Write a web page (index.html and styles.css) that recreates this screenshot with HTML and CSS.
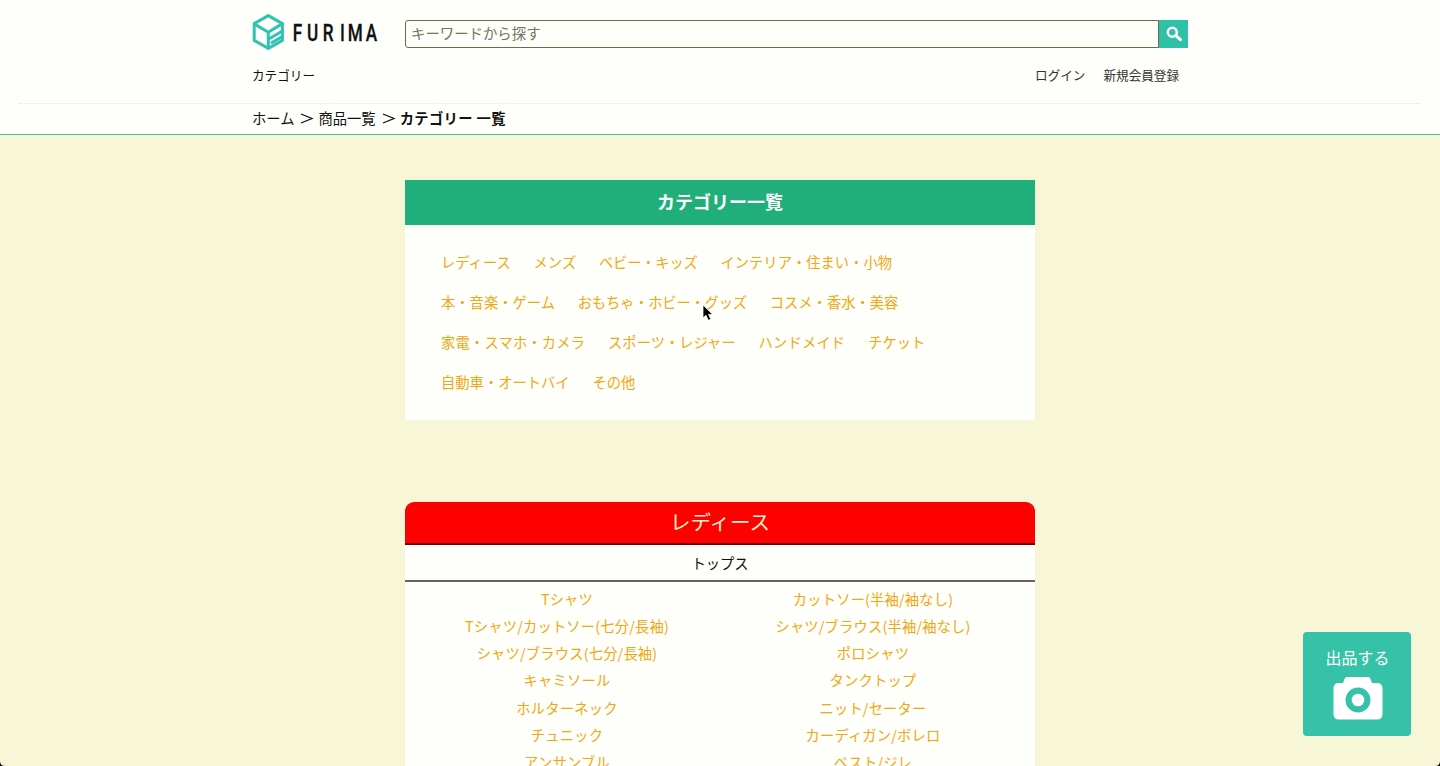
FILE: index.html
```html
<!DOCTYPE html>
<html lang="ja">
<head>
<meta charset="utf-8">
<title>FURIMA</title>
<link rel="stylesheet" href="styles.css">
</head>
<body>
<header class="header">
  <div class="header-top">
    <a class="logo">
      <svg width="130" height="38" viewBox="0 0 130 38">
        <g fill="none" stroke="#30c3b0" stroke-width="3" stroke-linejoin="round" stroke-linecap="round">
          <path d="M16.3 2.6 30.4 10.6V27.4L16.3 35.4 2.200 27.400V10.600Z"/>
          <path d="M2.500 11 16.300 19.300V35M16.300 19.300 30.400 10.600M16.800 26 30 18.300M20 29.500 30 23.800"/>
        </g>
        <text class="logo-text" transform="scale(.7 1)" x="58.300 78.500 101.200 125.700 136.800 162.500" y="28">FURIMA</text>
      </svg>
    </a>
    <form class="search">
      <input class="search-input" type="text" placeholder="キーワードから探す">
      <button class="search-button" type="button" aria-label="検索">
        <svg width="16" height="16" viewBox="0 0 16 16" fill="none" stroke="#fff"><circle cx="6.300" cy="6.200" r="4.500" stroke-width="2.500"/><path d="M9.700 9.400 14.300 13.700" stroke-width="3" stroke-linecap="round"/></svg>
      </button>
    </form>
  </div>
  <nav class="header-nav">
    <a>カテゴリー</a>
    <div class="user-links"><a>ログイン</a><a>新規会員登録</a></div>
  </nav>
  <div class="divider"></div>
  <div class="breadcrumbs"><a>ホーム</a><svg class="sep" viewBox="0 0 24 28"><path d="M7 10 18 14.500 7 19"/></svg><a>商品一覧</a><svg class="sep" viewBox="0 0 24 28"><path d="M7 10 18 14.500 7 19"/></svg><b>カテゴリー 一覧</b></div>
</header>
<main class="main">
  <section class="categories">
    <h2 class="categories-title">カテゴリー一覧</h2>
    <div class="categories-list">
      <a>レディース</a><a>メンズ</a><a class="tight">ベビー・キッズ</a><a>インテリア・住まい・小物</a>
      <a>本・音楽・ゲーム</a><a class="tight">おもちゃ・ホビー・グッズ</a><a>コスメ・香水・美容</a>
      <a class="wide">家電・スマホ・カメラ</a><a>スポーツ・レジャー</a><a class="wide">ハンドメイド</a><a>チケット</a>
      <a>自動車・オートバイ</a><a>その他</a>
    </div>
  </section>
  <section class="group">
    <h3 class="group-title">レディース</h3>
    <h4 class="group-subtitle">トップス</h4>
    <div class="group-items">
      <a>Tシャツ</a><a>カットソー(半袖/袖なし)</a>
      <a>Tシャツ/カットソー(七分/長袖)</a><a>シャツ/ブラウス(半袖/袖なし)</a>
      <a>シャツ/ブラウス(七分/長袖)</a><a>ポロシャツ</a>
      <a>キャミソール</a><a>タンクトップ</a>
      <a>ホルターネック</a><a>ニット/セーター</a>
      <a>チュニック</a><a>カーディガン/ボレロ</a>
      <a>アンサンブル</a><a>ベスト/ジレ</a>
    </div>
  </section>
</main>
<a class="sell">
  <span>出品する</span>
  <svg width="50" height="44" viewBox="0 0 50 44"><path fill="#fff" fill-rule="evenodd" d="M14 1H35Q37 1 37.500 3L39 7H44Q49.500 7 49.500 12.500V38Q49.500 43.500 44 43.500H6Q.5 43.500.5 38V12.500Q.5 7 6 7H10L11.500 3Q12 1 14 1ZM25 11.500A12.500 12.500 0 1 0 25 36.500 12.500 12.500 0 1 0 25 11.500Z"/><circle cx="25" cy="24" r="6.300" fill="#fff"/></svg>
</a>
<svg class="cursor" width="13" height="18" viewBox="0 0 13 18"><path d="M1 1V14L4 11.300 6.300 16.300 8.800 15.200 6.600 10.400H10.700Z" fill="#000" stroke="#fff" stroke-width=".8"/></svg>
<svg class="corner corner-left" width="5" height="5"><path d="M0 0Q0 5 5 5H0Z"/></svg>
<svg class="corner corner-right" width="5" height="5"><path d="M5 0Q5 5 0 5H5Z"/></svg>
</body>
</html>
```
FILE: styles.css
```css
* { box-sizing: border-box; margin: 0; padding: 0; }
body {
  height: 766px;
  overflow: hidden;
  background: #f7f7d8;
  color: #111;
  font-family: "Noto Sans CJK JP", sans-serif;
  font-size: 14.3px;
}
.header { height: 135px; background: #fefefa; border-bottom: 1px solid #4bb8a5; }
.header-top { width: 936px; height: 61px; margin: 0 auto; padding-top: 13px; display: flex; align-items: flex-start; }
.logo { width: 153px; height: 38px; }
.logo-text { font: 500 24.5px Roboto, sans-serif; fill: #111; stroke: #111; stroke-width: .3px; }
.search { flex: 1; height: 28px; margin-top: 7px; display: flex; }
.search-input {
  flex: 1; border: 1px solid #6d6d45; border-radius: 3px 0 0 3px; background: #fefefa;
  padding: 0 6px 3px 5px; font: 14.4px "Noto Sans CJK JP", sans-serif;
}
.search-input::placeholder { color: #757560; }
.search-button { width: 29px; border: 0; background: #30c0a8; display: flex; align-items: center; justify-content: center; }
.header-nav { width: 936px; height: 42px; margin: 0 auto; padding: 0 9px 0 0; display: flex; justify-content: space-between; line-height: 28px; font-size: 12.6px; }
.user-links { display: flex; gap: 18px; color: #333; line-height: 27px; }
.divider { height: 1px; margin: 0 19px; border-top: 1px dotted #e8e8b8; }
.breadcrumbs { width: 936px; margin: 0 auto; line-height: 28px; display: flex; }
.breadcrumbs b { letter-spacing: .35px; }
.sep { width: 24px; height: 28px; fill: none; stroke: #111; stroke-width: 1.3; }
.main { width: 630px; margin: 45px auto 0; }
.categories { height: 240px; background: #fefefa; }
.categories-title { height: 45px; line-height: 43px; background: #20af7a; color: #fff; text-align: center; font-size: 18px; }
.categories-list { padding: 17px 100px 0 36px; display: flex; flex-wrap: wrap; column-gap: 22.800px; line-height: 40px; color: #f0a810; }
.tight { letter-spacing: -.2px; }
.wide { letter-spacing: .17px; }
.group { margin-top: 82px; height: 300px; background: #fefefa; border-radius: 9px 9px 0 0; }
.group-title { height: 43px; line-height: 39px; border-bottom: 2px solid #700000; border-radius: 9px 9px 0 0; background: #f00; color: #fff0c8; text-align: center; font-size: 20.500px; font-weight: 400; }
.group-subtitle { height: 37px; line-height: 35px; border-bottom: 2px solid #65655c; text-align: center; font-size: 14.3px; font-weight: 400; }
.group-items { padding: 2.500px 9px 0; display: grid; grid-template-columns: 1fr 1fr; grid-auto-rows: 27.300px; line-height: 27.300px; text-align: center; letter-spacing: .17px; color: #f0a810; }
.sell {
  position: fixed; right: 29px; top: 632px; width: 108px; height: 104px; border-radius: 4px;
  background: #35c2a8; color: #fff; display: flex; flex-direction: column; align-items: center;
  padding: 13px 0 0 1px; font-size: 16px; line-height: 24px;
}
.sell svg { margin-top: 7px; }
.cursor { position: absolute; left: 702px; top: 304px; }
.corner { position: fixed; bottom: 0; }
.corner-left { left: 0; }
.corner-right { right: 0; }
```
